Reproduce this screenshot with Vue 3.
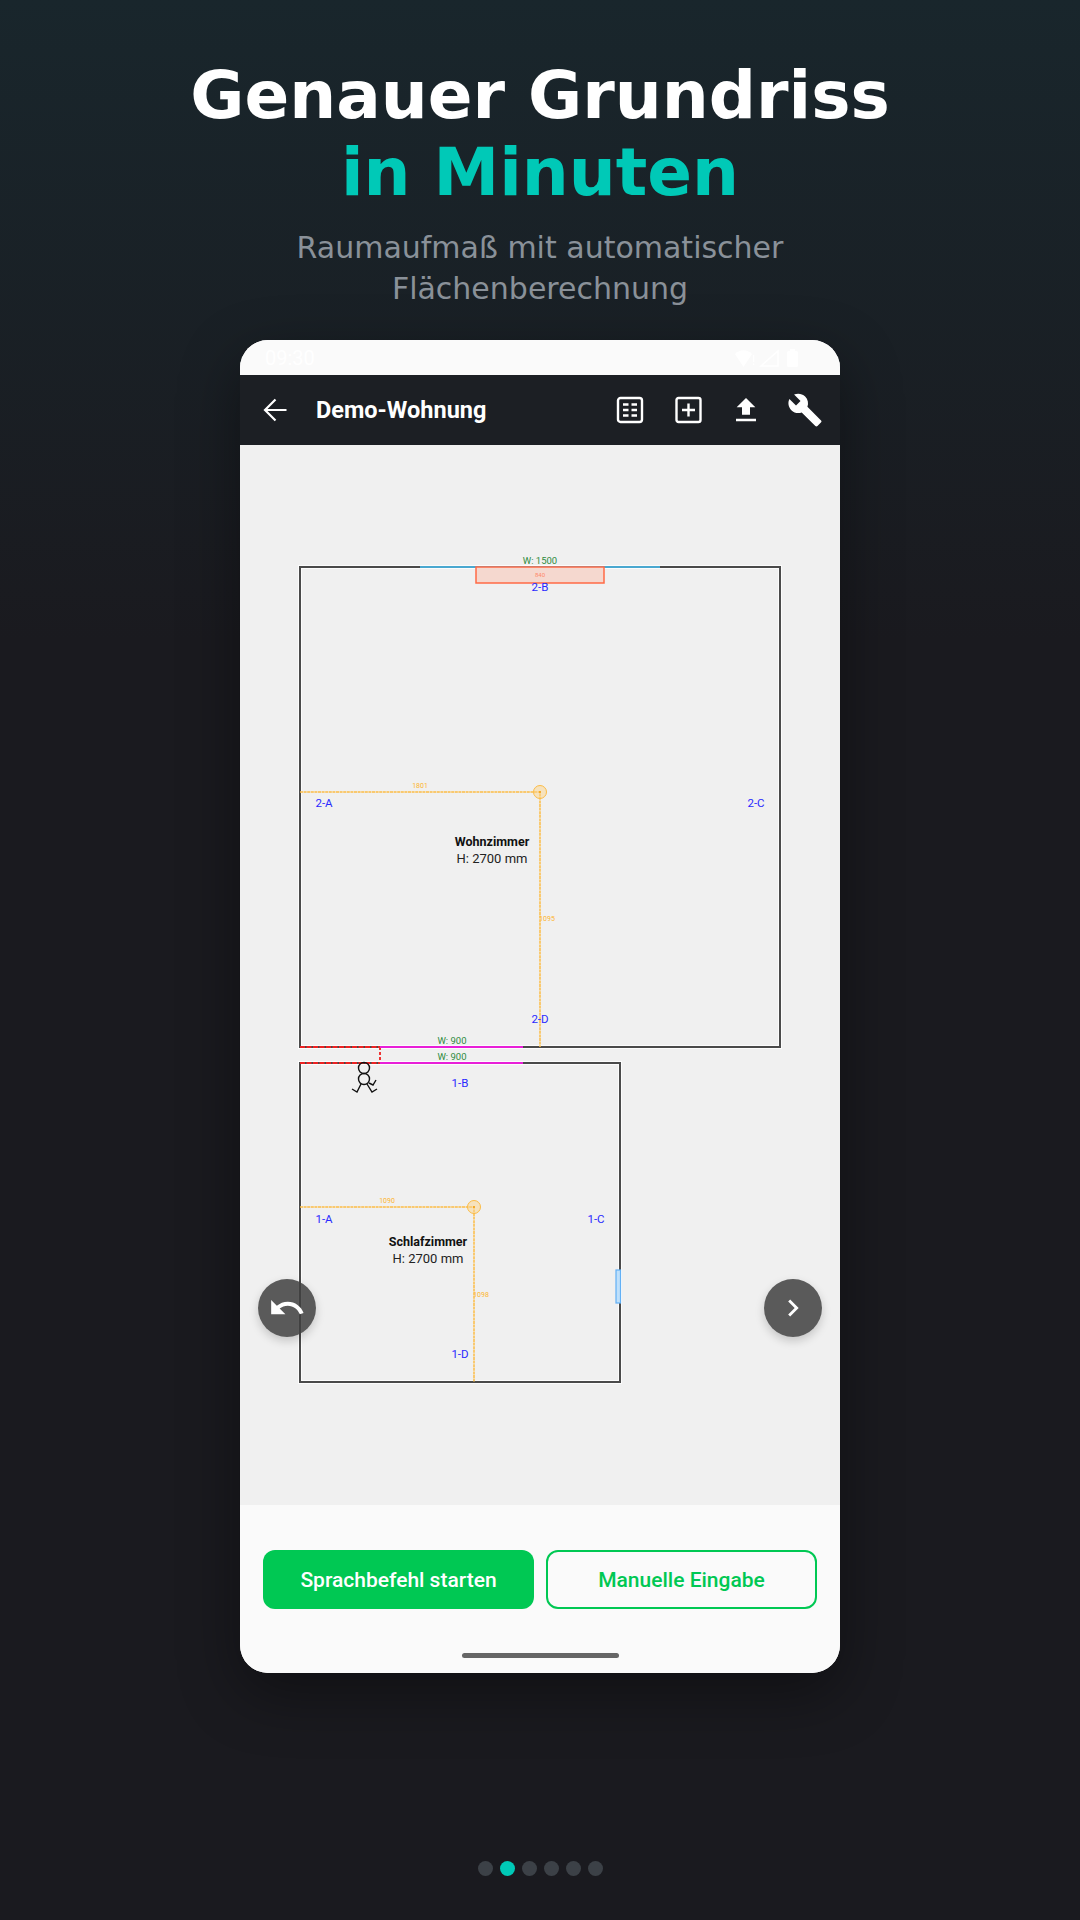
<template>
  <div class="page">
    <header class="hero">
      <h1 class="title">Genauer Grundriss<br /><span class="accent">in Minuten</span></h1>
      <p class="subtitle">Raumaufmaß mit automatischer<br />Flächenberechnung</p>
    </header>

    <div class="phone">
      <div class="statusbar">
        <span class="time">09:30</span>
        <svg class="status-icons" width="64" height="20" viewBox="0 0 64 20">
          <path d="M0 6C5 1 12 1 17 6L8.500 19z" fill="#fff" />
          <path d="M18 7h1.300v7H18zM18 15.500h1.300V17H18z" fill="#fff" />
          <path d="M43 3V18H26z" fill="none" stroke="#fff" stroke-width="1.500" />
          <rect x="52" y="3" width="11" height="16" rx="1.500" fill="#fff" />
          <rect x="55" y="1" width="5" height="3" fill="#fff" />
        </svg>
      </div>

      <div class="toolbar">
        <svg class="back" width="24" height="24" viewBox="0 0 24 24">
          <path d="M23.500 12H2M12.500 1.500 2 12l10.500 10.500" fill="none" stroke="#fff" stroke-width="2.200" />
        </svg>
        <span class="toolbar-title">Demo-Wohnung</span>
        <div class="actions">
          <svg width="28" height="28" viewBox="0 0 28 28">
            <rect x="2" y="2" width="24" height="24" rx="2.500" fill="none" stroke="#fff" stroke-width="2.400" />
            <path d="M7 8.500h5.500M15.500 8.500H21M7 14h5.500M15.500 14H21M7 19.500h5.500M15.500 19.500H21" stroke="#fff" stroke-width="2.400" />
          </svg>
          <svg width="28" height="28" viewBox="0 0 28 28">
            <rect x="2.500" y="2" width="24" height="24" rx="2" fill="none" stroke="#fff" stroke-width="2.400" />
            <path d="M14.500 7.500v13M8 14h13" stroke="#fff" stroke-width="2.400" />
          </svg>
          <svg width="32" height="32" viewBox="0 0 24 24">
            <path d="M9 15.500h6V10h4l-7-7-7 7h4zM4.500 18.500h15v2h-15z" fill="#fff" />
          </svg>
          <svg class="wrench" width="36" height="36" viewBox="0 0 24 24">
            <path d="M22.700 19l-9.100-9.100c.9-2.300.4-5-1.500-6.900-2-2-5-2.400-7.400-1.300L9 6 6 9 1.600 4.700C.4 7.100.9 10.100 2.900 12.100c1.900 1.900 4.600 2.400 6.900 1.500l9.100 9.100c.4.4 1 .4 1.400 0l2.300-2.300c.5-.4.500-1.100.1-1.400z" fill="#fff" />
          </svg>
        </div>
      </div>

      <div class="canvas">
        <svg class="plan" width="600" height="1060" viewBox="240 445 600 1060">
          <rect x="300" y="567" width="480" height="480" class="halo" />
          <rect x="300" y="1063" width="320" height="319" class="halo" />
          <rect x="300" y="567" width="480" height="480" class="wall" />
          <rect x="300" y="1063" width="320" height="319" class="wall" />

          <line x1="420" y1="567" x2="660" y2="567" stroke="#4aa8d0" stroke-width="2" />
          <rect x="476" y="567" width="128" height="16" fill="#f5d8cf" stroke="#ff6a45" stroke-width="1.500" />
          <rect x="616" y="1270" width="4.500" height="33" fill="#bfe0fb" stroke="#62b0f5" stroke-width="1.200" />

          <path d="M300 1047H380M300 1063H380" stroke="#ee2222" stroke-width="2" stroke-dasharray="5 1.500" />
          <path d="M380 1047V1063" stroke="#ee3333" stroke-width="2" stroke-dasharray="3 2" />
          <path d="M380 1047H523M380 1063H523" stroke="#e81fd8" stroke-width="2" />

          <g v-for="m in measures" :key="m.x" fill="none" stroke="#fcbc45" stroke-width="1.500">
            <path :d="`M300 ${m.y}H${m.x}V${m.end}`" stroke-dasharray="3 0.600" />
            <circle :cx="m.x" :cy="m.y" r="6.500" fill="#fbd48a" fill-opacity="0.5" stroke-width="1" />
            <circle :cx="m.x" :cy="m.y" r="1" fill="#f59e0b" stroke="none" />
          </g>

          <g fill="none" stroke="#111" stroke-width="1.400">
            <circle cx="364" cy="1068" r="5.500" />
            <circle cx="364" cy="1079" r="5.500" />
            <path d="M369 1083 373 1085 376 1080M361 1084 357 1092 352 1089M367 1084 372 1092 377 1089" />
          </g>

          <text v-for="t in walls" :key="t.label" :x="t.x" :y="t.y" class="wall-label">{{ t.label }}</text>
          <text v-for="t in widths" :key="t.y" :x="t.x" :y="t.y" class="width-label">{{ t.label }}</text>
          <text v-for="t in dims" :key="t.label" :x="t.x" :y="t.y" class="dim-label">{{ t.label }}</text>
          <text x="540" y="576.500" class="mini-label">840</text>

          <g v-for="r in rooms" :key="r.name">
            <text :x="r.x" :y="r.y" class="room-name">{{ r.name }}</text>
            <text :x="r.x" :y="r.y + 17" class="room-height">H: 2700 mm</text>
          </g>
        </svg>

        <button class="fab fab-left">
          <svg width="38" height="38" viewBox="0 0 24 24">
            <path d="M12.500 8c-2.650 0-5.050.99-6.900 2.600L2 7v9h9l-3.620-3.620c1.390-1.160 3.160-1.880 5.120-1.880 3.540 0 6.550 2.310 7.600 5.500l2.370-.78C21.080 11.030 17.150 8 12.500 8z" fill="#fff" />
          </svg>
        </button>
        <button class="fab fab-right">
          <svg width="34" height="34" viewBox="0 0 24 24">
            <path d="M10 6 8.590 7.410 13.170 12l-4.580 4.590L10 18l6-6z" fill="#fff" />
          </svg>
        </button>
      </div>

      <div class="bottom">
        <div class="buttons">
          <button class="btn btn-solid">Sprachbefehl starten</button>
          <button class="btn btn-outline">Manuelle Eingabe</button>
        </div>
        <div class="homebar"></div>
      </div>
    </div>

    <div class="dots">
      <span v-for="i in 6" :key="i" class="dot" :class="{ active: i === 2 }"></span>
    </div>
  </div>
</template>

<script setup>
const measures = [
  { x: 540, y: 792, end: 1047 },
  { x: 474, y: 1207, end: 1382 },
];

const walls = [
  { label: "2-B", x: 540, y: 591 },
  { label: "2-A", x: 324, y: 807 },
  { label: "2-C", x: 756, y: 807 },
  { label: "2-D", x: 540, y: 1023 },
  { label: "1-B", x: 460, y: 1087 },
  { label: "1-A", x: 324, y: 1223 },
  { label: "1-C", x: 596, y: 1223 },
  { label: "1-D", x: 460, y: 1358 },
];

const widths = [
  { label: "W: 1500", x: 540, y: 564 },
  { label: "W: 900", x: 452, y: 1044 },
  { label: "W: 900", x: 452, y: 1060 },
];

const dims = [
  { label: "1801", x: 420, y: 788 },
  { label: "1095", x: 547, y: 921 },
  { label: "1090", x: 387, y: 1203 },
  { label: "1098", x: 481, y: 1297 },
];

const rooms = [
  { name: "Wohnzimmer", x: 492, y: 846 },
  { name: "Schlafzimmer", x: 428, y: 1246 },
];
</script>

<style>
body {
  background: #1a1a1f;
}
</style>

<style scoped>
.page {
  width: 1080px;
  height: 1920px;
  display: flex;
  flex-direction: column;
  align-items: center;
  background: linear-gradient(180deg, #19262c 0, #1a1a1f 640px, #1a1a1f 100%);
  font-family: "DejaVu Sans", sans-serif;
  overflow: hidden;
}

.hero {
  padding-top: 57px;
  text-align: center;
}

.title {
  margin: 0;
  color: #fff;
  font-size: 66px;
  font-weight: 700;
  line-height: 77px;
}

.accent {
  color: #00c9b7;
}

.subtitle {
  margin: 16px 0 0;
  color: #8a9199;
  font-size: 30px;
  line-height: 41px;
}

.phone {
  width: 600px;
  height: 1333px;
  margin-top: 31px;
  display: flex;
  flex-direction: column;
  border-radius: 28px;
  overflow: hidden;
  background: #fafafa;
  box-shadow: 0 20px 60px rgba(0, 0, 0, 0.4);
}

.statusbar {
  height: 35px;
  flex: none;
  display: flex;
  align-items: center;
  justify-content: space-between;
  padding: 0 41px 0 25px;
  background: #fafafa;
}

.time {
  color: #fff;
  font-family: Roboto, sans-serif;
  font-size: 20px;
}

.toolbar {
  height: 70px;
  flex: none;
  display: flex;
  align-items: center;
  padding: 0 7px 0 23px;
  background: #1c1f24;
}

.toolbar-title {
  margin-left: 29px;
  color: #fff;
  font-family: Roboto, sans-serif;
  font-size: 23.500px;
  font-weight: 700;
}

.actions {
  margin-left: auto;
  display: grid;
  grid-template-columns: repeat(4, 58px);
  align-items: center;
  justify-items: center;
}

.actions svg {
  display: block;
}

.actions .wrench {
  margin-left: 1px;
}

.canvas {
  position: relative;
  flex: 1;
  background: #f0f0f0;
}

.plan {
  display: block;
}

.halo {
  fill: none;
  stroke: #fff;
  stroke-width: 4;
  stroke-opacity: 0.8;
}

.wall {
  fill: none;
  stroke: #4a4a4a;
  stroke-width: 2;
}

.plan text {
  font-family: Roboto, sans-serif;
  text-anchor: middle;
}

.wall-label {
  fill: #2a2aff;
  font-size: 11.500px;
}

.width-label {
  fill: #2e8b3d;
  font-size: 9.500px;
}

.dim-label {
  fill: #fdb52f;
  font-size: 7px;
}

.mini-label {
  fill: #ff8a6a;
  font-size: 6px;
}

.room-name {
  fill: #111;
  font-size: 12.500px;
  font-weight: 700;
}

.room-height {
  fill: #222;
  font-size: 13px;
}

.fab {
  position: absolute;
  top: 834px;
  width: 58px;
  height: 58px;
  padding: 0;
  display: flex;
  align-items: center;
  justify-content: center;
  border: 0;
  border-radius: 50%;
  background: rgba(64, 64, 64, 0.85);
  box-shadow: 0 4px 10px rgba(0, 0, 0, 0.18);
}

.fab-left {
  left: 18px;
}

.fab-right {
  right: 18px;
}

.bottom {
  height: 168px;
  flex: none;
  display: flex;
  flex-direction: column;
  align-items: center;
  background: #fafafa;
}

.buttons {
  display: flex;
  gap: 12px;
  margin-top: 45px;
}

.btn {
  width: 271px;
  height: 59px;
  padding: 0;
  border-radius: 12px;
  font-family: Roboto, sans-serif;
  font-size: 21px;
  font-weight: 500;
}

.btn-solid {
  border: 0;
  background: #00c853;
  color: #fff;
}

.btn-outline {
  border: 2px solid #00c853;
  background: transparent;
  color: #00c853;
}

.homebar {
  width: 157px;
  height: 5px;
  margin-top: 44px;
  border-radius: 3px;
  background: #666;
}

.dots {
  display: flex;
  gap: 7px;
  margin-top: 188px;
}

.dot {
  width: 15px;
  height: 15px;
  border-radius: 50%;
  background: #3c4147;
}

.dot.active {
  background: #00c9b7;
}
</style>
